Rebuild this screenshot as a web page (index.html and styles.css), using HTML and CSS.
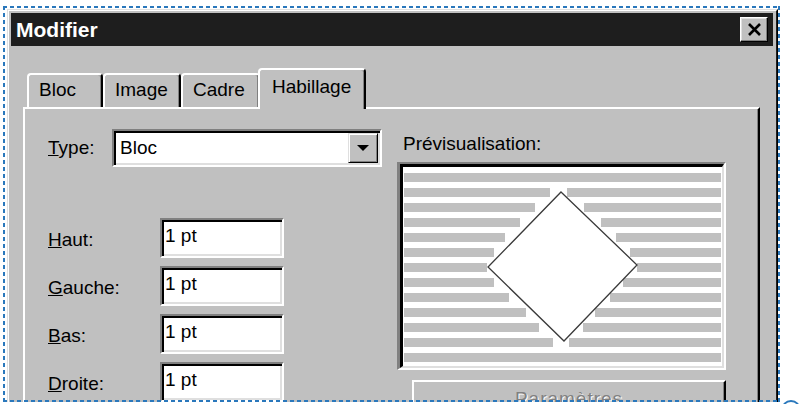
FILE: index.html
```html
<!DOCTYPE html>
<html lang="fr">
<head>
<meta charset="utf-8">
<title>Modifier</title>
<link rel="stylesheet" href="styles.css">
</head>
<body>
<div class="stage">
  <div class="win">
    <div class="win-in">
      <div class="titlebar">
        <span class="title">Modifier</span>
        <div class="close" aria-label="Fermer">
          <svg width="15" height="13" viewBox="0 0 15 13"><path d="M2 1 L13 12 M13 1 L2 12" stroke="#000" stroke-width="2.6" fill="none"/></svg>
        </div>
      </div>
      <div class="body">
        <div class="tabs">
          <div class="tab t-bloc">Bloc</div>
          <div class="tab t-image">Image</div>
          <div class="tab t-cadre">Cadre</div>
          <div class="tab sel">Habillage</div>
        </div>
        <div class="panel">
          <div class="col-left">
            <div class="type-row">
              <label class="lbl lbl-type"><u>T</u>ype:</label>
              <div class="select">
                <span class="sel-text">Bloc</span>
                <span class="drop"><svg width="12" height="6" viewBox="0 0 12 6"><path d="M0 0 H12 L6 6 Z" fill="#000"/></svg></span>
              </div>
            </div>
            <div class="fields">
              <div class="frow"><label class="lbl"><u>H</u>aut:</label><div class="field">1 pt</div></div>
              <div class="frow"><label class="lbl"><u>G</u>auche:</label><div class="field">1 pt</div></div>
              <div class="frow"><label class="lbl"><u>B</u>as:</label><div class="field">1 pt</div></div>
              <div class="frow"><label class="lbl"><u>D</u>roite:</label><div class="field">1 pt</div></div>
            </div>
          </div>
          <div class="col-right">
            <div class="pv-label">Prévisualisation:</div>
            <div class="pv-outer">
              <div class="pv-inner">
                <svg width="319" height="199" viewBox="0 0 319 199">
                  <g fill="#c0c0c0">
                    <rect x="1" y="6" width="317" height="9"/>
                    <rect x="1" y="21" width="146" height="9"/><rect x="164" y="21" width="154" height="9"/>
                    <rect x="1" y="36" width="131" height="9"/><rect x="181" y="36" width="137" height="9"/>
                    <rect x="1" y="51" width="116" height="9"/><rect x="198" y="51" width="120" height="9"/>
                    <rect x="1" y="66" width="101" height="9"/><rect x="213" y="66" width="105" height="9"/>
                    <rect x="1" y="81" width="90" height="9"/><rect x="227" y="81" width="91" height="9"/>
                    <rect x="1" y="96" width="83" height="9"/><rect x="234" y="96" width="84" height="9"/>
                    <rect x="1" y="111" width="90" height="9"/><rect x="220" y="111" width="98" height="9"/>
                    <rect x="1" y="126" width="105" height="9"/><rect x="207" y="126" width="111" height="9"/>
                    <rect x="1" y="141" width="122" height="9"/><rect x="192" y="141" width="126" height="9"/>
                    <rect x="1" y="156" width="135" height="9"/><rect x="180" y="156" width="138" height="9"/>
                    <rect x="1" y="171" width="149" height="9"/><rect x="166" y="171" width="152" height="9"/>
                    <rect x="1" y="186" width="317" height="9"/>
                  </g>
                  <polygon points="158,25 234,98 161,174 85,100" fill="#fff" stroke="#3a3a3a" stroke-width="1.3"/>
                </svg>
              </div>
            </div>
            <div class="btn-param">Paramètres</div>
          </div>
        </div>
      </div>
    </div>
  </div>
</div>
<div class="handle"></div>
</body>
</html>
```

FILE: styles.css
```css
html, body {
  margin: 0;
  padding: 0;
  background: #fff;
  overflow: hidden;
}

body {
  font-family: "Liberation Sans", Arial, sans-serif;
  font-size: 19px;
  color: #000;
}

.stage {
  position: relative;
  box-sizing: border-box;
  margin: 6px 0 0 3px;
  width: 777px;
  height: 396px;
  padding: 3px 2px 0 4px;
  overflow: hidden;
}

.stage::after {
  content: "";
  position: absolute;
  inset: 0;
  pointer-events: none;
  background:
    repeating-linear-gradient(90deg, #2a78bc 0 4px, transparent 4px 7px) 0 0 / 100% 2px no-repeat,
    repeating-linear-gradient(90deg, #2a78bc 0 4px, transparent 4px 7px) 0 100% / 100% 2px no-repeat,
    repeating-linear-gradient(180deg, #2a78bc 0 4px, transparent 4px 7px) 0 0 / 2px 100% no-repeat,
    repeating-linear-gradient(180deg, #2a78bc 0 4px, transparent 4px 7px) 100% 0 / 2px 100% no-repeat;
}

.win {
  box-sizing: border-box;
  width: 771px;
  border: 1px solid;
  border-color: #dfdfdf #000 #000 #dfdfdf;
}

.win-in {
  border: 1px solid;
  border-color: #fff #202020 #202020 #fff;
  padding: 2px 3px 2px 2px;
  background: #c0c0c0;
  height: 420px;
}

.titlebar {
  display: flex;
  align-items: center;
  justify-content: space-between;
  height: 33px;
  background: #1e1e1e;
  padding: 0 5px;
}

.title {
  color: #fff;
  font-weight: bold;
  font-size: 21px;
  line-height: 33px;
}

.close {
  box-sizing: border-box;
  width: 28px;
  height: 25px;
  border: 1px solid;
  border-color: #fff #000 #000 #fff;
  box-shadow: inset -1px -1px #808080, inset 1px 1px #dfdfdf;
  background: #c0c0c0;
  display: flex;
  align-items: center;
  justify-content: center;
}

.close svg { display: block; }

.body {
  padding: 22px 13px 0 12px;
}

.tabs {
  display: flex;
  align-items: flex-end;
  height: 39px;
  padding-left: 4px;
}

.tab {
  box-sizing: border-box;
  height: 34px;
  border-top: 2px solid #fff;
  border-left: 2px solid #fff;
  border-right: 2px solid #000;
  border-radius: 4px 4px 0 0;
  box-shadow: inset -1px 0 #808080;
  padding: 4px 0 0 10px;
  line-height: 22px;
  white-space: nowrap;
}

.t-bloc { width: 76px; }
.t-image { width: 78px; }
.t-cadre { width: 79px; }

.tab.sel {
  width: 108px;
  height: 41px;
  margin-left: -2px;
  margin-bottom: -2px;
  padding: 6px 0 0 12px;
  position: relative;
  z-index: 1;
  background: #c0c0c0;
}

.panel {
  box-sizing: border-box;
  height: 330px;
  border-top: 2px solid #fff;
  border-left: 2px solid #fff;
  border-right: 2px solid #000;
  box-shadow: inset -1px 0 #808080;
  display: flex;
  align-items: flex-start;
  padding: 20px 0 0 23px;
}

.col-left {
  width: 334px;
}

.type-row {
  display: flex;
  align-items: flex-start;
}

.lbl {
  display: block;
  line-height: 22px;
}

.lbl-type {
  width: 64px;
  padding-top: 8px;
}

.select {
  box-sizing: border-box;
  width: 270px;
  height: 38px;
  border: 2px solid;
  border-color: #808080 #fff #fff #808080;
  box-shadow: inset 2px 2px #000, inset -2px -2px #dfdfdf;
  background: #fff;
  display: flex;
  align-items: center;
  padding: 2px;
}

.sel-text {
  flex: 1;
  padding-left: 4px;
  line-height: 22px;
}

.drop {
  box-sizing: border-box;
  width: 30px;
  height: 30px;
  border: 1px solid;
  border-color: #dfdfdf #000 #000 #dfdfdf;
  box-shadow: inset 1px 1px #fff, inset -1px -1px #808080;
  background: #c0c0c0;
  display: flex;
  align-items: center;
  justify-content: center;
}

.drop svg { display: block; }

.fields {
  margin-top: 51px;
  display: flex;
  flex-direction: column;
  gap: 8px;
}

.frow {
  display: flex;
  align-items: flex-start;
}

.frow .lbl {
  width: 112px;
  padding-top: 11px;
}

.field {
  box-sizing: border-box;
  width: 124px;
  height: 40px;
  border: 2px solid;
  border-color: #808080 #fff #fff #808080;
  box-shadow: inset 2px 2px #000, inset -2px -2px #dfdfdf;
  background: #fff;
  padding: 5px 0 0 3px;
  line-height: 22px;
}

.col-right {
  margin-left: 15px;
  width: 329px;
  padding-top: 4px;
}

.pv-label {
  line-height: 22px;
  padding-left: 6px;
}

.pv-outer {
  margin-top: 7px;
  border-style: solid;
  border-width: 2px 2px 2px 3px;
  border-color: #808080 #fff #fff #808080;
}

.pv-inner {
  border-style: solid;
  border-width: 3px 2px 2px 3px;
  border-color: #000 #dfdfdf #dfdfdf #000;
  background: #fff;
}

.pv-inner svg {
  display: block;
}

.btn-param {
  box-sizing: border-box;
  margin: 10px 0 0 15px;
  width: 314px;
  height: 40px;
  border: 2px solid;
  border-color: #fff #000 #000 #fff;
  box-shadow: inset -1px -1px #808080;
  text-align: center;
  color: #808080;
  text-shadow: 1px 1px 0 #fff;
  padding-top: 6px;
  line-height: 22px;
  letter-spacing: 1px;
}

.handle {
  position: absolute;
  left: 781px;
  top: 400px;
  width: 20px;
  height: 20px;
  box-sizing: border-box;
  border: 2px solid #2a78bc;
  border-radius: 50%;
}
```
